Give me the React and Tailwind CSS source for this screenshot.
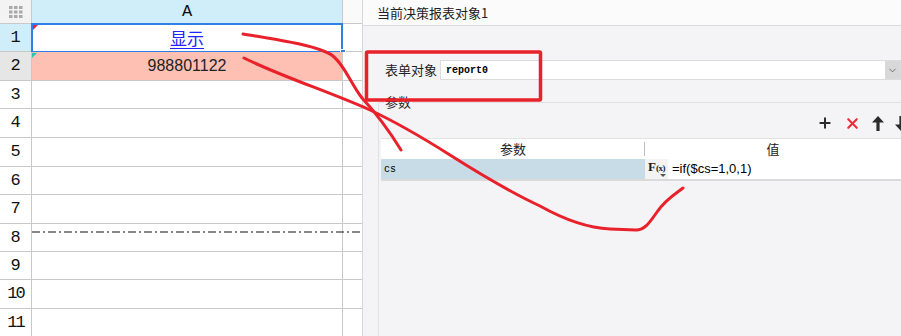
import {ChevronDown, Plus, X} from "lucide-react"

const rows = [
  {n: 1, h: "h-[28px]"},
  {n: 2, h: "h-[29px]"},
  {n: 3, h: "h-[28px]"},
  {n: 4, h: "h-[29px]"},
  {n: 5, h: "h-[29px]"},
  {n: 6, h: "h-[28px]"},
  {n: 7, h: "h-[29px]"},
  {n: 8, h: "h-[28px]"},
  {n: 9, h: "h-[28px]"},
  {n: 10, h: "h-[29px]"},
  {n: 11, h: "h-[28px]"},
]

function GridDots() {
  return (
    <svg width="14" height="12" viewBox="0 0 14 12">
      {[0, 1, 2].map((r) =>
        [0, 1, 2].map((c) => (
          <rect key={`${r}${c}`} x={c * 5} y={r * 4.5} width="3.5" height="3" fill="#a9a9a9" />
        ))
      )}
    </svg>
  )
}

// thick arrow with a solid head, as in the toolbar
function Arrow({down}) {
  return (
    <svg width="12" height="15" viewBox="0 0 12 15" className={down ? "rotate-180" : ""}>
      <path d="M6 0 L12 6.5 L7.6 6.5 L7.6 15 L4.4 15 L4.4 6.5 L0 6.5 Z" fill="#2b2b2b" />
    </svg>
  )
}

function Sheet() {
  return (
    <div className="w-[362px] shrink-0 flex flex-col font-['Liberation_Sans','Noto_Sans_CJK_SC',sans-serif]">
      {/* column header */}
      <div className="flex h-[24px] border-b border-[#c9c9c9] shrink-0">
        <div className="w-[32px] border-r border-[#c9c9c9] bg-[#f3f3f3] flex items-center justify-center">
          <GridDots />
        </div>
        <div className="w-[311px] border-r border-[#c9c9c9] bg-[#d0eefa] flex items-center justify-center text-[17px] text-[#111] font-['Liberation_Mono',monospace]">
          A
        </div>
        <div className="flex-1 bg-[#fafafa]" />
      </div>

      {rows.map((r) => (
        <div key={r.n} className={`flex ${r.h} border-b border-[#c9c9c9] shrink-0 relative`}>
          <div
            className={`w-[32px] border-r border-[#c9c9c9] flex items-center justify-center text-[17px] text-[#111] font-['Liberation_Mono',monospace] ${
              r.n === 1 ? "bg-[#d0eefa]" : r.n === 2 ? "bg-[#e6e6e6]" : "bg-white"
            } ${r.n >= 10 ? "tracking-[-2px]" : ""}`}
          >
            {r.n}
          </div>
          <div
            className={`w-[311px] border-r border-[#c9c9c9] flex items-center justify-center relative ${
              r.n === 2 ? "bg-[#fdc0b3]" : "bg-white"
            }`}
          >
            {r.n === 1 && (
              <>
                <span className="text-[17px] text-[#2222ff] underline underline-offset-[3px] font-['Noto_Sans_CJK_SC',sans-serif] leading-none">
                  显示
                </span>
                <div className="absolute -left-[1px] -top-[1px] -right-[1px] -bottom-[2px] border-2 border-[#2f7fe6]" />
                <div className="absolute top-[1px] left-[1px] w-0 h-0 border-t-[5px] border-r-[5px] border-t-[#e8204a] border-r-transparent" />
                <div className="absolute -right-[4px] -bottom-[4px] w-[6px] h-[6px] bg-[#2f7fe6] border border-white" />
              </>
            )}
            {r.n === 2 && (
              <>
                <span className="text-[16px] text-[#222]">988801122</span>
                <div className="absolute top-[1px] left-0 w-0 h-0 border-t-[5px] border-r-[5px] border-t-[#22c9b0] border-r-transparent" />
              </>
            )}
          </div>
          <div className="flex-1 bg-white" />
          {r.n === 8 && (
            <svg className="absolute left-[32px] top-[7px]" width="330" height="2">
              <line x1="0" y1="1" x2="330" y2="1" stroke="#111" strokeWidth="1" strokeDasharray="8 3 2 3" />
            </svg>
          )}
        </div>
      ))}
    </div>
  )
}

function RightPanel() {
  return (
    <div className="flex-1 flex flex-col border-l border-[#d6d6d6] bg-[#f4f4f6] font-['Noto_Sans_CJK_SC',sans-serif] text-[#222] overflow-hidden">
      <div className="h-[26px] shrink-0 bg-[#fbfbfb] border-b border-[#dcdcdc] flex items-center pl-[14px] text-[13px]">
        当前决策报表对象1
      </div>

      <div className="pt-[34px] flex items-center h-[54px] shrink-0">
        <div className="w-[77px] pl-[22px] text-[13px] shrink-0">表单对象</div>
        <div className="flex-1 flex h-[20px] border border-[#dcdcdc] bg-white">
          <div className="flex-1 flex items-center pl-[5px] text-[10px] font-semibold text-black font-['Liberation_Mono',monospace]">
            report0
          </div>
          <div className="w-[15px] bg-[#d8d8d8] flex items-center justify-center">
            <ChevronDown size={11} strokeWidth={1.5} color="#444" />
          </div>
        </div>
      </div>

      <fieldset className="flex-1 ml-[15px] mt-[15px] border-t border-l border-[#e1e1e3] min-w-0">
        <legend className="ml-[5px] px-[1px] text-[13px] leading-[14px]">参数</legend>
        <div className="flex justify-end items-center gap-[11px] h-[24px] -mr-[6px] mt-[2px]">
          <Plus size={16} strokeWidth={3} color="#2b2b2b" />
          <X size={17} strokeWidth={3} color="#e8323b" />
          <Arrow />
          <Arrow down />
        </div>
        <div className="ml-[2px] mt-[3px] border-t border-[#e3e3e3]">
          <div className="flex h-[20px] bg-white text-[13px]">
            <div className="w-[264px] flex items-center justify-center relative">
              参数
              <div className="absolute right-0 top-[3px] h-[14px] border-r border-[#bdbdbd]" />
            </div>
            <div className="flex-1 flex items-center justify-center">值</div>
          </div>
          <div className="flex h-[22px] border-b-2 border-[#dadada]">
            <div className="w-[264px] bg-[#c8dce8] flex items-center pl-[3px] text-[10px] text-black font-['Liberation_Mono',monospace]">
              cs
            </div>
            <div className="w-[23px] bg-[#f3f3f3] relative">
              <span className="absolute left-[3px] top-[1px] font-['Liberation_Serif',serif] font-bold text-[13px] leading-none">
                F<span className="text-[9px] tracking-[-0.5px]">(x)</span>
              </span>
              <div className="absolute left-[15px] bottom-[2px] w-0 h-0 border-l-[3px] border-r-[3px] border-t-[3px] border-l-transparent border-r-transparent border-t-[#555]" />
            </div>
            <div className="flex-1 bg-white flex items-center pl-[4px] text-[13px] text-black font-['Liberation_Sans',sans-serif]">
              =if($cs=1,0,1)
            </div>
          </div>
        </div>
      </fieldset>
    </div>
  )
}

export default function App() {
  return (
    <div className="w-[901px] h-[336px] overflow-hidden relative flex bg-white">
      <Sheet />
      <RightPanel />
      {/* hand-drawn annotations */}
      <svg className="absolute inset-0 pointer-events-none" width="901" height="336">
        <g fill="none" stroke="#e8212b" strokeWidth="3" strokeLinecap="round" strokeLinejoin="round">
          <rect x="366.5" y="52" width="174" height="48" rx="1" strokeWidth="3.5" />
          <path d="M243 34 C 280 40, 320 46, 333 56 C 345 66, 350 82, 362 98 C 375 112, 390 132, 401 150" />
          <path d="M244 58 C 280 76, 330 92, 370 110 C 400 124, 420 136, 450 155 C 480 174, 510 192, 540 206 C 565 220, 590 228, 610 229 L 636 230 C 645 230, 650 222, 657 212 C 665 200, 675 194, 683 188" />
        </g>
      </svg>
    </div>
  )
}
